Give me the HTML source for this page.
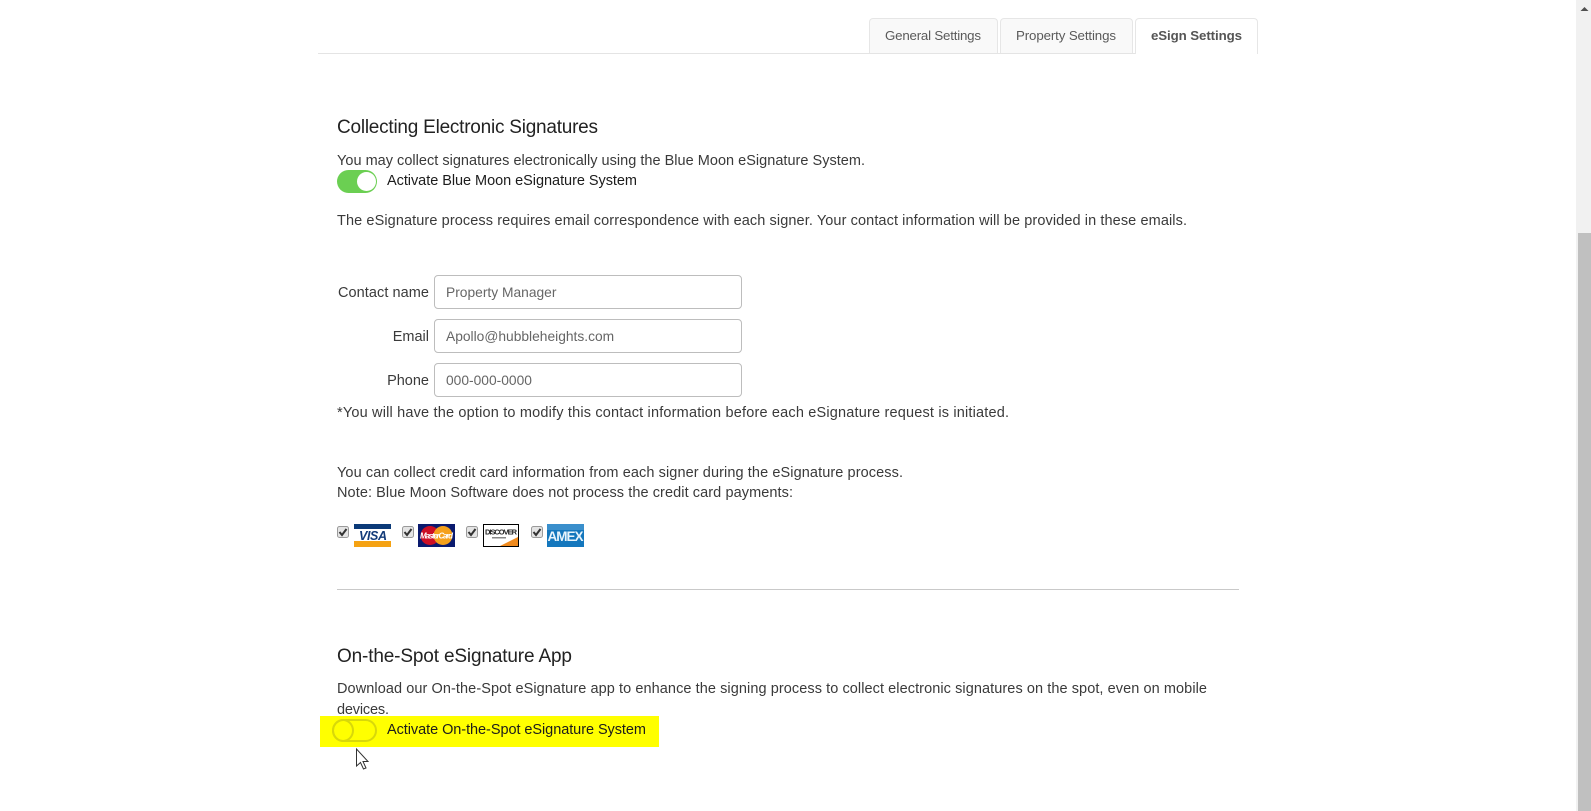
<!DOCTYPE html>
<html lang="en"><head><meta charset="utf-8"><title>eSign Settings</title>
<style>
html,body{margin:0;padding:0;width:1591px;height:811px;overflow:hidden;background:#fff;font-family:"Liberation Sans",sans-serif}
.a{position:absolute;box-sizing:border-box}
.tab{position:absolute;top:18px;height:35px;box-sizing:border-box;border:1px solid #e6e6e6;border-bottom:0;border-radius:4px 4px 0 0;background:#f9f9f9}
input{position:absolute;left:434px;width:308px;height:34px;box-sizing:border-box;border:1px solid #bdbdbd;border-radius:4px;padding:0 0 0 11px;margin:0;background:#fff;color:#666;font:13.8px "Liberation Sans",sans-serif;outline:0}
svg.t{position:absolute;left:0;top:0}
svg.t text{font-family:"Liberation Sans",sans-serif;font-size:14.5px;fill:#3a3a3a}
</style></head><body>
<div class="a" style="left:318px;top:53px;width:940px;height:1px;background:#e4e4e4"></div>
<div class="tab" style="left:869px;width:129px"></div>
<div class="tab" style="left:1000px;width:133px"></div>
<div class="tab" style="left:1135px;width:123px;height:36px;background:#fff"></div>
<div class="a" style="left:320px;top:716px;width:339px;height:31px;background:#ffff00"></div>
<div class="a" style="left:337px;top:170px;width:40px;height:23px;border-radius:12px;background:#6bcf52"></div>
<div class="a" style="left:357px;top:172px;width:19px;height:19px;border-radius:50%;background:#fff"></div>
<div class="a" style="left:332px;top:719px;width:45px;height:23px;border-radius:12px;border:2px solid #d8d80a"></div>
<div class="a" style="left:332px;top:719px;width:22px;height:23px;border-radius:50%;border:2px solid #d8d80a"></div>
<div class="a" style="left:337px;top:589px;width:902px;height:1px;background:#c9c9c9"></div>
<input style="top:275px" value="Property Manager">
<input style="top:319px" value="Apollo@hubbleheights.com">
<input style="top:363px" value="000-000-0000">
<div class="a" style="left:1576px;top:0;width:15px;height:811px;background:#f1f1f1"></div>
<div class="a" style="left:1578px;top:233px;width:13px;height:578px;background:#c0c0c0"></div>
<svg class="t" width="1591" height="811" viewBox="0 0 1591 811">
<path d="M1584.500 7l4 4h-8z" fill="#505050"/>
<text x="885" y="40" textLength="96" style="font-size:13.300px;fill:#5a5a5a">General Settings</text>
<text x="1016" y="40" textLength="100" style="font-size:13.300px;fill:#5a5a5a">Property Settings</text>
<text x="1151" y="40" textLength="91" style="font-size:13.300px;font-weight:bold;fill:#555">eSign Settings</text>
<text x="337" y="133" textLength="261" style="font-size:19px;fill:#222">Collecting Electronic Signatures</text>
<text x="337" y="165" textLength="528">You may collect signatures electronically using the Blue Moon eSignature System.</text>
<text x="387" y="185" textLength="250" style="fill:#1c1c1c">Activate Blue Moon eSignature System</text>
<text x="337" y="225" textLength="850">The eSignature process requires email correspondence with each signer. Your contact information will be provided in these emails.</text>
<text x="338" y="297" textLength="91">Contact name</text>
<text x="429" y="341" text-anchor="end">Email</text>
<text x="429" y="385" text-anchor="end">Phone</text>
<text x="337" y="417" textLength="672">*You will have the option to modify this contact information before each eSignature request is initiated.</text>
<text x="337" y="477" textLength="566">You can collect credit card information from each signer during the eSignature process.</text>
<text x="337" y="497" textLength="456">Note: Blue Moon Software does not process the credit card payments:</text>
<text x="337" y="662" textLength="235" style="font-size:19px;fill:#222">On-the-Spot eSignature App</text>
<text x="337" y="693" textLength="870">Download our On-the-Spot eSignature app to enhance the signing process to collect electronic signatures on the spot, even on mobile</text>
<text x="337" y="714" textLength="52">devices.</text>
<text x="387" y="734" textLength="259" style="fill:#1c1c1c">Activate On-the-Spot eSignature System</text>

<g fill="#e4e4e4" stroke="#9a9a9a">
<rect x="337.500" y="526.500" width="11" height="11" rx="2"/>
<rect x="402.500" y="526.500" width="11" height="11" rx="2"/>
<rect x="466.500" y="526.500" width="11" height="11" rx="2"/>
<rect x="531.500" y="526.500" width="11" height="11" rx="2"/>
</g>
<g fill="none" stroke="#333" stroke-width="2">
<path d="M339.500 532l2.500 3 4.500-6"/><path d="M404.500 532l2.500 3 4.500-6"/><path d="M468.500 532l2.500 3 4.500-6"/><path d="M533.500 532l2.500 3 4.500-6"/>
</g>

<rect x="354" y="524" width="37" height="23" fill="#fff"/>
<rect x="354" y="524" width="37" height="5" fill="#0b3a78"/>
<rect x="354" y="541" width="37" height="6" fill="#f5a213"/>
<text x="359" y="540" textLength="28" style="font-size:12.500px;font-weight:bold;font-style:italic;fill:#123a78">VISA</text>

<rect x="418" y="524" width="37" height="23" fill="#0a1a6e"/>
<circle cx="430" cy="535.500" r="9.500" fill="#cc0f25"/>
<circle cx="443" cy="535.500" r="9.500" fill="#f5a11b"/>
<text x="420" y="538.500" textLength="33" style="font-size:8px;font-weight:bold;font-style:italic;fill:#fff">MasterCard</text>

<rect x="483.500" y="524.500" width="35" height="22" fill="#fff" stroke="#000"/>
<path d="M500 546l18-9v9z" fill="#f08a1d"/>
<text x="485" y="534.500" textLength="32" style="font-size:7.500px;font-weight:bold;fill:#222">DISCOVER</text>
<rect x="492" y="537" width="14" height="1.500" fill="#888"/>

<rect x="547" y="524" width="37" height="23" fill="#1477bd"/>
<path d="M547 524h37v6h-37z" fill="#3a8fcc"/>
<text x="547.500" y="541" textLength="36" style="font-size:13.500px;font-weight:bold;fill:#e8f4fc">AMEX</text>

<path d="M356.500 749v17l4-3.500 3 6.500 2.500-1-3-6.500h5z" fill="#fff" stroke="#333" stroke-width="1"/>
</svg>
</body></html>
